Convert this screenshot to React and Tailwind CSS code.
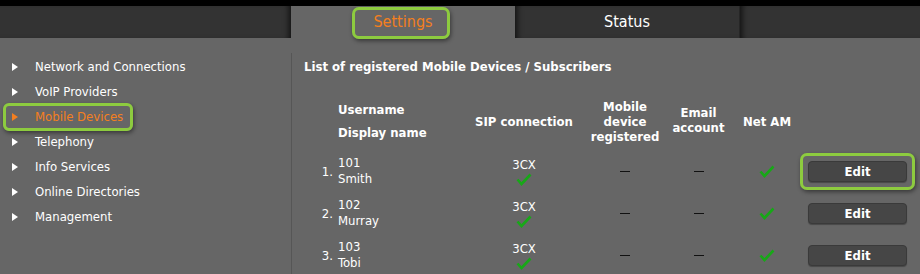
const menu = [
  "Network and Connections",
  "VoIP Providers",
  "Mobile Devices",
  "Telephony",
  "Info Services",
  "Online Directories",
  "Management",
];

const rows = [
  { n: "1.", user: "101", name: "Smith", marked: true },
  { n: "2.", user: "102", name: "Murray" },
  { n: "3.", user: "103", name: "Tobi" },
];

function Check() {
  return (
    <svg width="16" height="13" viewBox="0 0 16 13" className="block">
      <path d="M1.5 6.5 L5.5 11 L14.5 1.5" fill="none" stroke="#17a817" strokeWidth="2.6" strokeLinejoin="miter" />
    </svg>
  );
}

function Triangle({ active }) {
  return (
    <span
      className={`block w-0 h-0 border-y-[4px] border-y-transparent border-l-[6px] ${
        active ? "border-l-[#f47f20]" : "border-l-white"
      }`}
    />
  );
}

function Dash() {
  return (
    <div className="flex justify-center">
      <span className="block w-[10px] h-[1px] bg-[#111111]" />
    </div>
  );
}

export default function App() {
  return (
    <div className="w-[920px] h-[274px] overflow-hidden bg-[#666666] text-white [font-family:'DejaVu_Sans_Condensed','DejaVu_Sans',sans-serif]">
      <div className="h-[6px] bg-black" />
      <div className="flex h-[32px] bg-[#333333]">
        <div className="w-[291px] shadow-[inset_-6px_0_6px_-4px_rgba(0,0,0,0.7)]" />
        <div className="w-[224px] bg-[#666666] flex items-center justify-center">
          <span className="relative text-[16px] leading-[20px] text-[#f47f20]">
            Settings
            <span className="absolute -left-[21px] -right-[17px] -top-[5px] -bottom-[7px] rounded-[7px] border-[3px] border-[#8dcb3f] shadow-[1px_2px_4px_rgba(0,0,0,0.45)]" />
          </span>
        </div>
        <div className="w-[224px] flex items-center justify-center text-[16px] text-white shadow-[inset_6px_0_6px_-4px_rgba(0,0,0,0.7)]">
          Status
        </div>
        <div className="flex-1 border-l border-[#262626] shadow-[inset_6px_0_6px_-4px_rgba(0,0,0,0.7)]" />
      </div>

      <div className="flex">
        <aside className="w-[291px] pt-[16px]">
          {menu.map((item) => {
            const active = item === "Mobile Devices";
            return (
              <div key={item} className="relative flex items-center h-[25px] text-[13px]">
                <div className="w-[35px] pl-[12px]">
                  <Triangle active={active} />
                </div>
                <span className={active ? "text-[#f47f20]" : ""}>{item}</span>
                {active && (
                  <span className="absolute left-[3px] w-[130px] -top-[1px] -bottom-[2px] rounded-[6px] border-[3px] border-[#8dcb3f] shadow-[1px_2px_4px_rgba(0,0,0,0.45)]" />
                )}
              </div>
            );
          })}
        </aside>

        <main className="flex-1 mt-[15px] border-l border-[#565656] pl-[12px] h-[230px]">
          <h2 className="pt-[6px] text-[13px] leading-[16px] font-bold">
            List of registered Mobile Devices / Subscribers
          </h2>

          <div className="mt-[22px] grid grid-cols-[32px_133px_110px_92px_55px_82px_99px] text-[13px] font-bold">
            <div className="h-[48px]" />
            <div className="flex flex-col justify-center gap-[8px] leading-[15px] pl-[2px]">
              <span>Username</span>
              <span>Display name</span>
            </div>
            <div className="flex items-center justify-center leading-[15px]">SIP connection</div>
            <div className="flex items-center justify-center text-center leading-[15px]">
              Mobile
              <br />
              device
              <br />
              registered
            </div>
            <div className="flex items-center justify-center text-center leading-[15px] -mt-[2px]">
              Email
              <br />
              account
            </div>
            <div className="flex items-center justify-center leading-[15px]">Net AM</div>
            <div />
          </div>

          <div className="mt-[5px]">
            {rows.map((r) => (
              <div
                key={r.n}
                className="grid grid-cols-[32px_133px_110px_92px_55px_82px_99px] h-[42px] items-center text-[13px]"
              >
                <div className="text-right pr-[3px] pt-[2px]">{r.n}</div>
                <div className="flex flex-col leading-[16px] pl-[2px]">
                  <span>{r.user}</span>
                  <span>{r.name}</span>
                </div>
                <div className="flex flex-col items-center leading-[16px]">
                  <span>3CX</span>
                  <Check />
                </div>
                <Dash />
                <Dash />
                <div className="flex justify-center">
                  <Check />
                </div>
                <div className="relative">
                  <button className="w-[99px] h-[21px] rounded-[4px] border border-[#3a3a3a] bg-[#464646] text-white font-bold text-[13px] leading-[19px] shadow-[0_1px_1px_rgba(0,0,0,0.3)]">
                    Edit
                  </button>
                  {r.marked && (
                    <span className="absolute -left-[8px] -right-[8px] -top-[8px] -bottom-[8px] rounded-[7px] border-[3px] border-[#8dcb3f] shadow-[1px_2px_4px_rgba(0,0,0,0.45)]" />
                  )}
                </div>
              </div>
            ))}
          </div>
        </main>
      </div>
    </div>
  );
}
